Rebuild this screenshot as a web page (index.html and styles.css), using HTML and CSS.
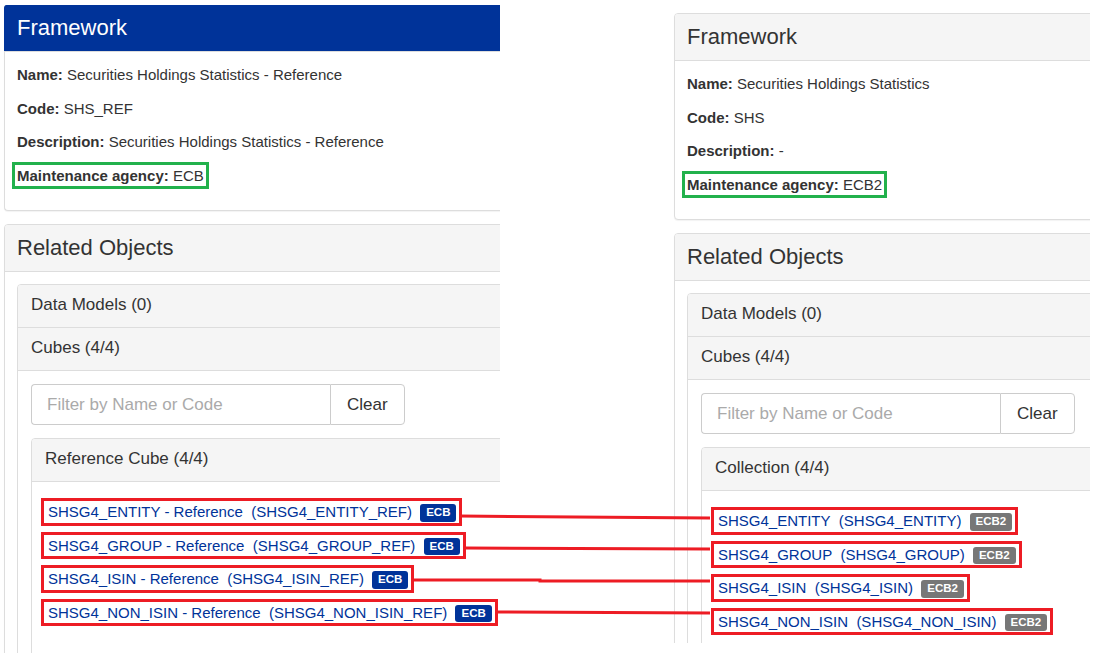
FILE: index.html
```html
<!DOCTYPE html>
<html lang="en">
<head>
  <meta charset="UTF-8" />
  <title>Framework comparison</title>
  <link rel="stylesheet" href="styles.css">
</head>
<body>

  <div class="canvas">

    <!-- Left screenshot: SHS_REF -->
    <div class="shot shot-left">
      <div class="page">
        <div class="panel panel-primary">
          <div class="panel-heading"><h3 class="panel-title">Framework</h3></div>
          <div class="panel-body">
            <p><b>Name:</b> Securities Holdings Statistics - Reference</p>
            <p><b>Code:</b> SHS_REF</p>
            <p><b>Description:</b> Securities Holdings Statistics - Reference</p>
            <p><span class="mark-green"><b>Maintenance agency:</b> ECB</span></p>
          </div>
        </div>

        <div class="panel">
          <div class="panel-heading"><h3 class="panel-title">Related Objects</h3></div>
          <div class="panel-body">
            <div class="group">
              <div class="group-heading">Data Models (0)</div>
              <div class="group-heading">Cubes (4/4)</div>
              <div class="group-body">
                <div class="input-group">
                  <input type="text" placeholder="Filter by Name or Code" />
                  <button>Clear</button>
                </div>
                <div class="group">
                  <div class="group-heading">Reference Cube (4/4)</div>
                  <ul class="cube-list">
                    <li><span class="mark-red"><a href="#">SHSG4_ENTITY - Reference&nbsp; (SHSG4_ENTITY_REF)</a> <span class="label label-ecb">ECB</span></span></li>
                    <li><span class="mark-red"><a href="#">SHSG4_GROUP - Reference&nbsp; (SHSG4_GROUP_REF)</a> <span class="label label-ecb">ECB</span></span></li>
                    <li><span class="mark-red"><a href="#">SHSG4_ISIN - Reference&nbsp; (SHSG4_ISIN_REF)</a> <span class="label label-ecb">ECB</span></span></li>
                    <li><span class="mark-red"><a href="#">SHSG4_NON_ISIN - Reference&nbsp; (SHSG4_NON_ISIN_REF)</a> <span class="label label-ecb">ECB</span></span></li>
                  </ul>
                </div>
              </div>
            </div>
          </div>
        </div>
      </div>
    </div>

    <!-- Right screenshot: SHS -->
    <div class="shot shot-right">
      <div class="page">
        <div class="panel">
          <div class="panel-heading"><h3 class="panel-title">Framework</h3></div>
          <div class="panel-body">
            <p><b>Name:</b> Securities Holdings Statistics</p>
            <p><b>Code:</b> SHS</p>
            <p><b>Description:</b> -</p>
            <p><span class="mark-green"><b>Maintenance agency:</b> ECB2</span></p>
          </div>
        </div>

        <div class="panel">
          <div class="panel-heading"><h3 class="panel-title">Related Objects</h3></div>
          <div class="panel-body">
            <div class="group">
              <div class="group-heading">Data Models (0)</div>
              <div class="group-heading">Cubes (4/4)</div>
              <div class="group-body">
                <div class="input-group">
                  <input type="text" placeholder="Filter by Name or Code" />
                  <button>Clear</button>
                </div>
                <div class="group">
                  <div class="group-heading">Collection (4/4)</div>
                  <ul class="cube-list">
                    <li><span class="mark-red"><a href="#">SHSG4_ENTITY&nbsp; (SHSG4_ENTITY)</a> <span class="label label-ecb2">ECB2</span></span></li>
                    <li><span class="mark-red"><a href="#">SHSG4_GROUP&nbsp; (SHSG4_GROUP)</a> <span class="label label-ecb2">ECB2</span></span></li>
                    <li><span class="mark-red"><a href="#">SHSG4_ISIN&nbsp; (SHSG4_ISIN)</a> <span class="label label-ecb2">ECB2</span></span></li>
                    <li><span class="mark-red"><a href="#">SHSG4_NON_ISIN&nbsp; (SHSG4_NON_ISIN)</a> <span class="label label-ecb2">ECB2</span></span></li>
                  </ul>
                </div>
              </div>
            </div>
          </div>
        </div>
      </div>
    </div>

    <!-- connector lines between matching cubes -->
    <svg class="connectors" width="1095" height="653" viewBox="0 0 1095 653">
      <polyline points="459,516 710,518" />
      <polyline points="466,548 710,549" />
      <polyline points="413,580 540,580 540,581 710,581" />
      <polyline points="498,612 710,613" />
    </svg>

  </div>

</body>
</html>
```

FILE: styles.css
```css
:root {
  --ecb-blue: #003399;
  --border: #dddddd;
  --heading-bg: #f5f5f5;
  --text: #333;
  --mark-red: #ed1c24;
  --mark-green: #22b14c;
}

* {
  box-sizing: border-box;
}

body {
  margin: 0;
  background: #fff;
  font-family: "Liberation Sans", Arial, sans-serif;
  font-size: 15px;
  color: var(--text);
}

.canvas {
  position: relative;
  width: 1095px;
  height: 653px;
  display: flex;
  align-items: flex-start;
  overflow: hidden;
}

.shot {
  overflow: hidden;
}

.shot-left {
  width: 500px;
  height: 653px;
  padding: 5px 0 0 4px;
}

.shot-right {
  width: 420px;
  height: 643px;
  margin-left: 170px;
  padding: 13px 0 0 4px;
}

.page {
  width: 640px;
}

/* panels */
.panel {
  border: 1px solid var(--border);
  border-radius: 4px;
  margin-bottom: 13px;
  box-shadow: 0 1px 1px rgba(0, 0, 0, 0.05);
  background: #fff;
}

.panel-heading {
  background: var(--heading-bg);
  border-bottom: 1px solid var(--border);
  border-radius: 3px 3px 0 0;
  padding: 10px 12px;
}

.panel-primary {
  border-color: var(--ecb-blue);
  border-bottom-color: var(--border);
  border-left-color: var(--border);
}

.panel-primary .panel-heading {
  background: var(--ecb-blue);
  color: #fff;
  margin: -1px -1px 0 -1px;
  padding-left: 13px;
}

.panel-title {
  margin: 0;
  font-size: 22px;
  font-weight: normal;
  line-height: 26px;
}

.panel-body {
  padding: 12px;
}

.panel-body p {
  margin: 0 0 12px;
  line-height: 21.5px;
}

.mark-green {
  outline: 3px solid var(--mark-green);
  outline-offset: 2px;
}

/* nested accordion */
.group {
  border: 1px solid var(--border);
  border-radius: 4px;
}

.group-heading {
  background: var(--heading-bg);
  border-bottom: 1px solid var(--border);
  padding: 9px 13px 11px;
  font-size: 17px;
  line-height: 22px;
}

.group > .group-heading:first-child {
  border-radius: 3px 3px 0 0;
}

.group-body {
  padding: 13px;
}

.input-group {
  display: flex;
  margin-bottom: 13px;
}

.input-group input {
  width: 299px;
  height: 41px;
  padding: 8px 15px;
  font: 17px "Liberation Sans", Arial, sans-serif;
  color: var(--text);
  border: 1px solid #ccc;
  border-right: none;
  border-radius: 4px 0 0 4px;
}

.input-group input::placeholder {
  color: #aaa;
}

.input-group button {
  height: 41px;
  padding: 0 16px;
  font: 17px "Liberation Sans", Arial, sans-serif;
  color: var(--text);
  background: #fff;
  border: 1px solid #ccc;
  border-radius: 0 4px 4px 0;
}

.cube-list {
  list-style: none;
  margin: 0;
  padding: 13px 0 40px 12px;
}

.cube-list li {
  padding: 6px 0;
  line-height: 21.5px;
}

.cube-list a {
  color: var(--ecb-blue);
  text-decoration: none;
}

.mark-red {
  display: inline-block;
  padding: 0 3px 0 4px;
  outline: 3px solid var(--mark-red);
}

.label {
  display: inline-block;
  margin-left: 4px;
  padding: 3px 6px;
  font-size: 11.5px;
  font-weight: bold;
  line-height: 1;
  color: #fff;
  border-radius: 3px;
  vertical-align: 1px;
}

.label-ecb {
  background: var(--ecb-blue);
}

.label-ecb2 {
  background: #777;
}

.connectors {
  position: absolute;
  top: 0;
  left: 0;
  pointer-events: none;
}

.connectors polyline {
  fill: none;
  stroke: var(--mark-red);
  stroke-width: 3;
}
```
